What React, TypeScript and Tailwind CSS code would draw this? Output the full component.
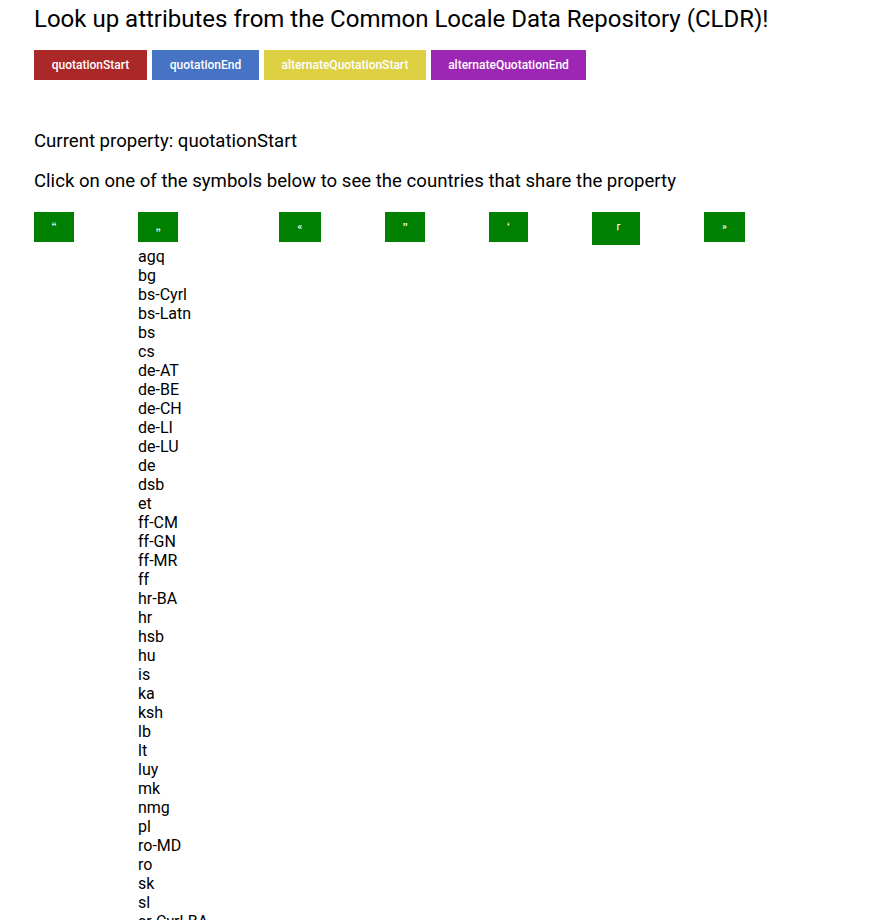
import React from "react";

const props = [
  { label: "quotationStart", cls: "bg-[#ab2828] w-[113px]" },
  { label: "quotationEnd", cls: "bg-[#4673c4] w-[107px]" },
  { label: "alternateQuotationStart", cls: "bg-[#ddd043] w-[162px]" },
  { label: "alternateQuotationEnd", cls: "bg-[#9c27b5] w-[155px]" },
];

const symbols = [
  { s: "\u201C", cls: "w-[40px] h-[30px]" },
  { s: "\u201E", cls: "w-[40px] h-[30px]" },
  { s: "\u00AB", cls: "w-[42px] h-[30px]" },
  { s: "\u201D", cls: "w-[40px] h-[30px]" },
  { s: "\u2018", cls: "w-[39px] h-[30px]" },
  { s: "\u300C", cls: "w-[48px] h-[33px]" },
  { s: "\u00BB", cls: "w-[41px] h-[30px]" },
];

const locales = [
  "agq", "bg", "bs-Cyrl", "bs-Latn", "bs", "cs", "de-AT", "de-BE", "de-CH", "de-LI",
  "de-LU", "de", "dsb", "et", "ff-CM", "ff-GN", "ff-MR", "ff", "hr-BA", "hr", "hsb",
  "hu", "is", "ka", "ksh", "lb", "lt", "luy", "mk", "nmg", "pl", "ro-MD", "ro", "sk",
  "sl", "sr-Cyrl-BA",
];

export default function App() {
  return (
    <div className="bg-white text-black px-[34px] font-['Roboto',sans-serif] overflow-hidden h-[920px]">
      <div className="pt-[5px] text-[24px] leading-[28px] whitespace-nowrap">
        Look up attributes from the Common Locale Data Repository (CLDR)!
      </div>
      <div className="mt-[17px] flex gap-[5px]">
        {props.map((p) => (
          <div
            key={p.label}
            className={`${p.cls} h-[30px] flex items-center justify-center text-white text-[12px] font-medium`}
          >
            {p.label}
          </div>
        ))}
      </div>
      <div className="mt-[51px] text-[18.6px] leading-[21px]">Current property: quotationStart</div>
      <div className="mt-[19px] text-[18.6px] leading-[21px] whitespace-nowrap">
        Click on one of the symbols below to see the countries that share the property
      </div>
      <div className="mt-[20px] flex items-start gap-[64px]">
        {symbols.map((sym, i) => (
          <div key={i} className={`flex flex-col ${i === 1 ? "w-[77px]" : ""}`}>
            <div
              className={`${sym.cls} bg-[#008000] text-white text-[9px] font-bold flex items-center justify-center font-['Noto_Sans_CJK_JP',sans-serif]`}
            >
              {sym.s}
            </div>
            {i === 1 && (
              <div className="mt-[5px] text-[16px] leading-[19px] whitespace-nowrap">
                {locales.map((l) => (
                  <div key={l}>{l}</div>
                ))}
              </div>
            )}
          </div>
        ))}
      </div>
    </div>
  );
}
